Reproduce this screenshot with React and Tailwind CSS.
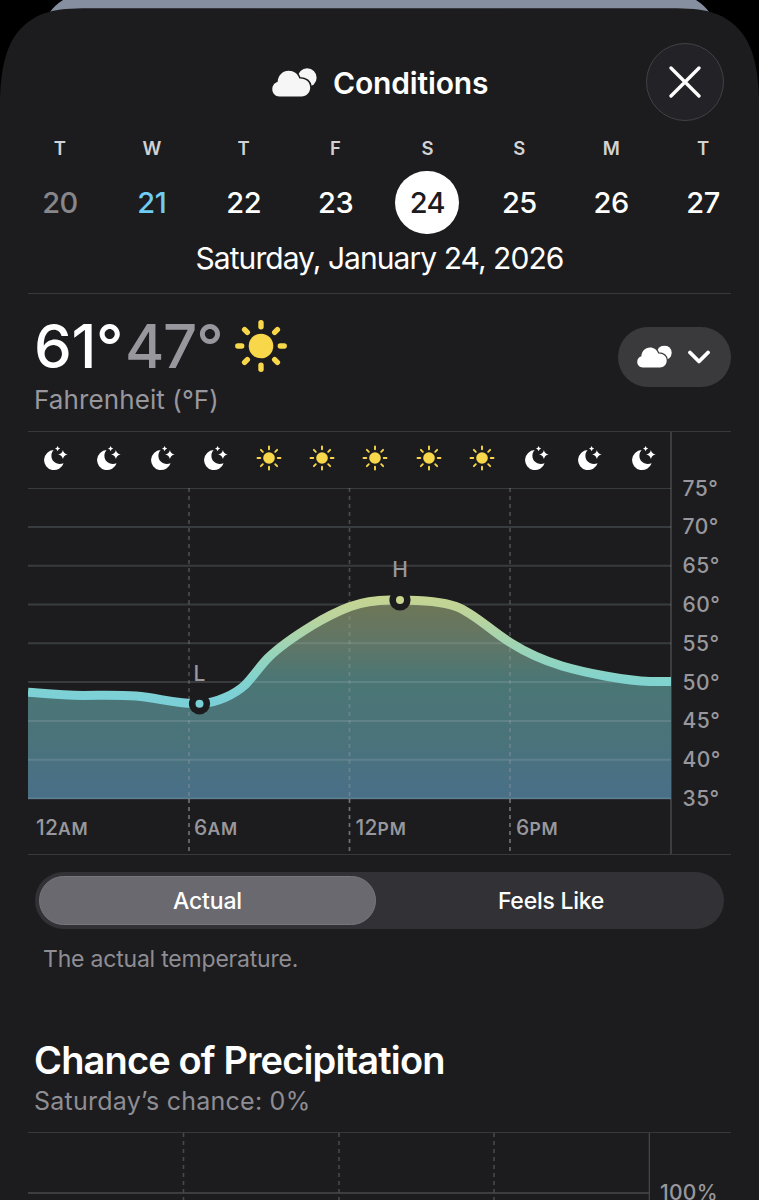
import React from "react";

const DAYS = [
  ["T", "20", "text-[#87868b]"],
  ["W", "21", "text-[#6fccf4]"],
  ["T", "22", "text-white"],
  ["F", "23", "text-white"],
  ["S", "24", "bg-white text-[#1c1c1e]"],
  ["S", "25", "text-white"],
  ["M", "26", "text-white"],
  ["T", "27", "text-white"],
];

const HOURS = ["moon", "moon", "moon", "moon", "sun", "sun", "sun", "sun", "sun", "moon", "moon", "moon"];
const SCALE = ["75°", "70°", "65°", "60°", "55°", "50°", "45°", "40°", "35°"];

// Temperature curve, in chart coordinates
const CURVE =
  "M0 204.2 C18 205.6 35 207.4 55 207.4 C75 207.4 90 206.8 108 208 C130 209.6 145 215.8 171.5 215.8 C190 214.8 207 206 217 197 C225 189 232 178 240 170 C250 160 267 148 285 137 C300 128 312 122.5 321.5 118.8 C338 112.8 350 112 362 112 L372 112 C398 112 415 114 428 118.5 C446 125 463 143 483 155 C502 167 516 172.5 534 178 C556 184.5 598 193 622 193.4 L643 193.6";

const CLOUD =
  "M7.4 28.5 C3.2 28.5 0.3 25.3 0.3 21.3 C0.3 17.6 2.6 14.8 5.6 14.1 C6 7.5 10.5 2.8 16.8 2.8 C21.8 2.8 25.6 5.6 27.4 10.5 C33.7 10.2 38.2 14 38.2 19.6 C38.2 24.7 34.6 28.5 29.5 28.5Z";

function Cloud({ id, className }) {
  return (
    <svg viewBox="0 0 45 29" className={className} fill="currentColor">
      <mask id={id} maskUnits="userSpaceOnUse" x="0" y="0" width="45" height="29">
        <rect width="45" height="29" fill="white" />
        <path d={CLOUD} fill="black" stroke="black" strokeWidth="3.2" />
      </mask>
      <path d={CLOUD} />
      <circle cx="35.2" cy="9.7" r="9.4" mask={`url(#${id})`} />
    </svg>
  );
}

function Sun({ className, disc, inner, outer, width }) {
  return (
    <svg viewBox="-26 -26 52 52" className={className}>
      <circle r={disc} fill="#f9d74a" />
      {[0, 45, 90, 135, 180, 225, 270, 315].map((a) => (
        <line key={a} x1="0" x2="0" y1={-inner} y2={-outer} transform={`rotate(${a})`} stroke="#f9d74a" strokeWidth={width} strokeLinecap="round" />
      ))}
    </svg>
  );
}

function Moon() {
  return (
    <svg viewBox="-13 -14 26 26" className="h-[26px] w-[26px]" fill="white">
      <path d="M-1.4 -8.9 A10 10 0 1 0 8.6 4.2 C2 6.6 -3.8 2.4 -3.6 -3.6 C-3.5 -5.6 -2.7 -7.5 -1.4 -8.9Z" />
      <path d="M2.6 -13 Q3 -10.9 5.2 -10.4 Q3 -9.9 2.6 -7.8 Q2.2 -9.9 0 -10.4 Q2.2 -10.9 2.6 -13Z" />
      <path d="M7.9 -9.1 Q8.6 -5.3 12.7 -4.5 Q8.6 -3.7 7.9 0.1 Q7.2 -3.7 3.1 -4.5 Q7.2 -5.3 7.9 -9.1Z" />
    </svg>
  );
}

function Marker({ x, y, label, color, dy }) {
  return (
    <g>
      <circle cx={x} cy={y} r="10.6" fill="#1c1c1e" />
      <circle cx={x} cy={y} r="4" fill={color} />
      <text x={x} y={y + dy} textAnchor="middle" fill="#98979d" fontSize="21" fontWeight="500">{label}</text>
    </g>
  );
}

function TimeLabel({ x, n, half }) {
  return (
    <text x={x} y="347" fill="#98979d" fontSize="21" fontWeight="500" letterSpacing="0.2">
      {n}<tspan fontSize="17.5" fontWeight="600" letterSpacing="0.8">{half}</tspan>
    </text>
  );
}

function TemperatureChart() {
  return (
    <svg viewBox="0 0 643 366" className="block h-[366px] w-[643px]">
      <defs>
        <linearGradient id="line" gradientUnits="userSpaceOnUse" x1="0" x2="0" y1="108" y2="212">
          <stop offset="0" stopColor="#c6d490" />
          <stop offset="0.2" stopColor="#bbd49d" />
          <stop offset="0.5" stopColor="#9dd4b6" />
          <stop offset="0.8" stopColor="#82d3cd" />
          <stop offset="1" stopColor="#7bd0d8" />
        </linearGradient>
        <linearGradient id="area" gradientUnits="userSpaceOnUse" x1="0" x2="0" y1="112" y2="311">
          <stop offset="0" stopColor="#6f7655" />
          <stop offset="0.2" stopColor="#627665" />
          <stop offset="0.4" stopColor="#4b7675" />
          <stop offset="0.7" stopColor="#4a737a" />
          <stop offset="0.85" stopColor="#4a7182" />
          <stop offset="1" stopColor="#496f88" />
        </linearGradient>
      </defs>
      <path d={`${CURVE} V311 H0 Z`} fill="url(#area)" />
      {SCALE.map((s, i) => (
        <line key={s} x1="0" x2="643" y1={i * 38.8 + 0.1} y2={i * 38.8 + 0.1} stroke="#aebfc1" strokeOpacity="0.2" strokeWidth="2" />
      ))}
      {[161, 321.5, 482].map((x) => (
        <g key={x} stroke="#a7a7aa" strokeWidth="1.7" strokeDasharray="4 4">
          <line x1={x} x2={x} y1="0" y2="310" strokeOpacity="0.33" />
          <line x1={x} x2={x} y1="311" y2="366" strokeOpacity="0.6" />
        </g>
      ))}
      <path d={CURVE} fill="none" stroke="url(#line)" strokeWidth="9" />
      <Marker x={171.5} y={215.8} label="L" color="#7bd0d8" dy={-23} />
      <Marker x={372} y={112} label="H" color="#c9d68f" dy={-23} />
      <TimeLabel x={8} n="12" half="AM" />
      <TimeLabel x={166} n="6" half="AM" />
      <TimeLabel x={327.5} n="12" half="PM" />
      <TimeLabel x={488} n="6" half="PM" />
    </svg>
  );
}

function PrecipitationChart() {
  return (
    <svg viewBox="0 0 622 68" className="block h-[68px] w-[622px] shrink-0">
      <line x1="0" x2="622" y1="60" y2="60" stroke="#3d3d40" strokeWidth="2" />
      {[155.5, 311, 466].map((x) => (
        <line key={x} x1={x} x2={x} y1="0" y2="68" stroke="#48484b" strokeWidth="1.6" strokeDasharray="4 4" />
      ))}
      <line x1="621.5" x2="621.5" y1="0" y2="68" stroke="#444447" strokeWidth="1.6" />
    </svg>
  );
}

export default function App() {
  return (
    <div className="relative h-[1200px] w-[759px] overflow-hidden bg-black font-['Inter',sans-serif] text-white">
      <svg viewBox="0 0 759 110" className="absolute left-0 top-0 h-[110px] w-[759px]">
        <path d="M63 0 Q55 5 50 12 H709 Q704 5 696 0Z" fill="#858f9f" />
        <path d="M0 110 V98 C1 66 7 46 17 33 C26 22 36 15 52 11 C63 8.6 76 8.3 96 8.3 H663 C683 8.3 696 8.6 707 11 C723 15 733 22 742 33 C752 46 758 66 759 98 V110Z" fill="#1c1c1e" />
      </svg>

      <div className="relative flex h-full flex-col px-7 pt-[43px]">
        <div className="absolute inset-x-0 bottom-0 top-[109px] bg-[#1c1c1e]" />
        <header className="relative flex h-[79px] items-center">
          <div className="flex flex-1 items-center pl-[244px]">
            <Cloud id="head" className="h-[29px] w-[45px] text-[#f6f6f7]" />
            <h1 className="ml-4 pt-px text-[30px] font-semibold leading-none tracking-[-0.15px]">Conditions</h1>
          </div>
          <button className="mr-[7px] flex h-[78px] w-[78px] items-center justify-center rounded-full border-[1.5px] border-[#424246] bg-[#232327]">
            <svg viewBox="0 0 32 32" className="h-8 w-8" stroke="white" strokeWidth="3.3" strokeLinecap="round">
              <path d="M2 2L30 30M30 2L2 30" />
            </svg>
          </button>
        </header>

        <div className="relative -ml-[14px] -mr-[18px] mt-[16px] grid grid-cols-8">
          {DAYS.map(([d, n, cls], i) => (
            <div key={i} className="flex flex-col items-center">
              <span className="h-[21px] text-[18.5px] font-semibold leading-[20px] text-[#d2d2d4]">{d}</span>
              <span className={`mt-[12px] flex h-[63px] w-16 items-center justify-center rounded-full pt-px text-[29px] font-medium tracking-[-0.5px] ${cls}`}>{n}</span>
            </div>
          ))}
        </div>
        <p className="relative mt-[4px] h-[40px] text-center text-[30px] leading-[40px] tracking-[-0.95px]">Saturday, January 24, 2026</p>
        <div className="relative mt-[15px] h-px bg-[#38383a]" />

        <section className="relative flex h-[138px] justify-between">
          <div className="pl-[6px] pt-[23px]">
            <div className="flex h-[58px] items-center text-[60px] font-medium leading-[58px]">
              <span className="tracking-[-0.4px]">61°</span>
              <span className="ml-[2px] tracking-[-1.2px] text-[#98979e]">47°</span>
              <Sun className="ml-[13px] h-[52px] w-[52px]" disc="12.3" inner="19.3" outer="23.2" width="5.4" />
            </div>
            <p className="mt-[8px] text-[26px] leading-[34px] tracking-[0.1px] text-[#98979e]">Fahrenheit (°F)</p>
          </div>
          <button className="mt-[33px] flex h-[60px] w-[113px] items-center justify-center gap-[16px] rounded-full bg-[#3a3a3d] pr-[2px]">
            <Cloud id="pill" className="h-[23px] w-[35px]" />
            <svg viewBox="0 0 22 14" className="h-[14px] w-[22px]" fill="none" stroke="white" strokeWidth="3.8" strokeLinecap="round" strokeLinejoin="round">
              <path d="M2 2.5L11 11.5L20 2.5" />
            </svg>
          </button>
        </section>

        <section className="relative flex h-[424px] border-y border-[#38383a]">
          <div className="w-[643.5px] border-r-2 border-[#3d3d40]">
            <div className="grid h-[56px] grid-cols-12 pb-1">
              {HOURS.map((h, i) => (
                <div key={i} className="flex items-center justify-center">
                  {h === "moon" ? <Moon /> : <Sun className="h-[26px] w-[26px]" disc="11.6" inner="17.5" outer="23" width="3.8" />}
                </div>
              ))}
            </div>
            <TemperatureChart />
          </div>
          <ul className="flex flex-col pl-[11px] pt-[37.6px] text-[21px] font-medium tracking-[0.5px] text-[#98979d]">
            {SCALE.map((s) => (
              <li key={s} className="h-[38.8px] leading-[38.8px]">{s}</li>
            ))}
          </ul>
        </section>

        <div className="relative mx-[7px] mt-[17px] flex h-[57px] shrink-0 rounded-full bg-[#313136] p-1 text-[23px] font-medium">
          <button className="flex w-[337px] items-center justify-center rounded-full border border-[#77767b] bg-[#6a696f] pt-px tracking-[-0.15px]">Actual</button>
          <button className="flex flex-1 items-center justify-center pl-[6px] pt-px tracking-[-0.25px]">Feels Like</button>
        </div>
        <p className="relative mt-[14px] pl-[15px] text-[23px] leading-[32px] tracking-[-0.2px] text-[#8e8d93]">The actual temperature.</p>

        <h2 className="relative mt-[62px] pl-[6px] text-[38px] font-semibold leading-[46px] tracking-[-0.85px]">Chance of Precipitation</h2>
        <p className="relative pl-[6px] text-[25px] leading-[36px] tracking-[0.25px] text-[#8e8d93]">Saturday’s chance: 0%</p>
        <section className="relative mt-[13px] flex h-[68px] border-t border-[#38383a]">
          <PrecipitationChart />
          <span className="pl-[10px] pt-[49px] text-[21px] font-medium leading-[22px] tracking-[0.3px] text-[#98979d]">100%</span>
        </section>
      </div>
    </div>
  );
}
